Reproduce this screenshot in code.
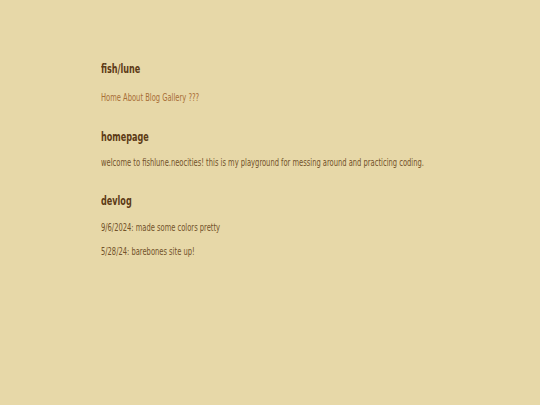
export default function App() {
  return (
    <div className="min-h-[405px] w-full overflow-hidden bg-[#e7d8a8] pt-[61px] pl-[101px]" style={{ fontFamily: '"DejaVu Sans Condensed", "DejaVu Sans", sans-serif' }}>
      <div className="w-[600px] origin-top-left scale-x-[0.75] text-[#72522a]">
        <h1 className="text-[12px] font-bold leading-[16px] text-[#5c3a15]">fish/lune</h1>
        <nav className="mt-[14px] text-[10px] leading-[14px] text-[#a86e36]">
          <a>Home</a> <a>About</a> <a>Blog</a> <a>Gallery</a> <a>???</a>
        </nav>
        <h2 className="mt-[24px] text-[12px] font-bold leading-[16px] text-[#5c3a15]">homepage</h2>
        <p className="mt-[11px] text-[10px] leading-[14px]">welcome to fishlune.neocities! this is my playground for messing around and practicing coding.</p>
        <h2 className="mt-[23px] text-[12px] font-bold leading-[16px] text-[#5c3a15]">devlog</h2>
        <p className="mt-[12px] text-[10px] leading-[14px]">9/6/2024: made some colors pretty</p>
        <p className="mt-[10px] text-[10px] leading-[14px]">5/28/24: barebones site up!</p>
      </div>
    </div>
  );
}
